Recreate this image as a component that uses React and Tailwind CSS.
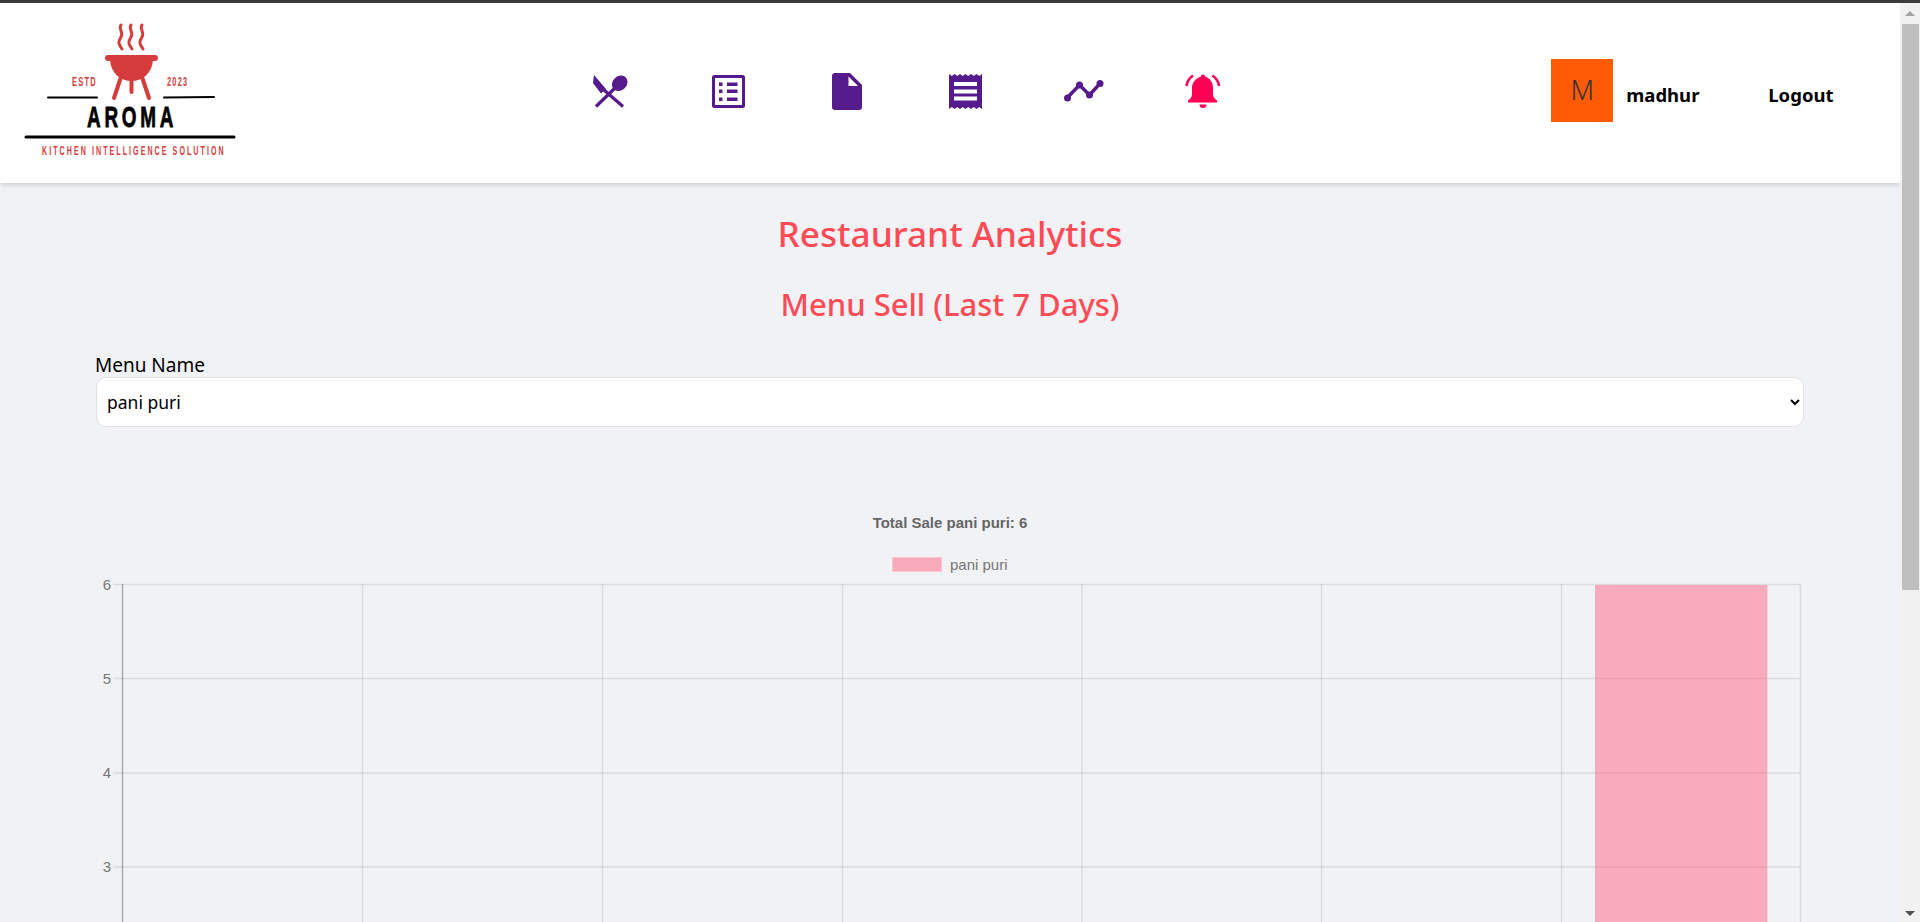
import React from 'react';

const Logo = () => (
    <svg width="260" height="180" viewBox="0 3 260 180" className="shrink-0">
        <g fill="none" stroke="#d63c3c" strokeWidth="3" strokeLinecap="round">
            <path d="M121 25c-3 4 3 7 0 12s-3 6 1 12" />
            <path d="M131 25c-3 4 3 7 0 12s-3 6 1 12" />
            <path d="M142 25c-3 4 3 7 0 12s-3 6 1 12" />
        </g>
        <rect x="105" y="55" width="53" height="6" rx="3" fill="#d63c3c" />
        <path d="M110 60h43c-1 13-10 21-21.500 21s-20.500-8-21.500-21z" fill="#d63c3c" />
        <g stroke="#d63c3c" strokeWidth="4" strokeLinecap="round">
            <path d="M121 77l-7 21" />
            <path d="M142 77l7 21" />
            <path d="M131.500 80v12" />
        </g>
        <g fill="#d63c3c" fontFamily="'Liberation Sans', sans-serif" fontWeight="700">
            <text transform="translate(72 86) scale(.62 1)" fontSize="12" letterSpacing="2">ESTD</text>
            <text transform="translate(167 86) scale(.62 1)" fontSize="12" letterSpacing="2">2023</text>
            <text transform="translate(42 155) scale(.59 1)" fontSize="12" letterSpacing="3.500">KITCHEN INTELLIGENCE SOLUTION</text>
        </g>
        <g stroke="#000" strokeWidth="2" strokeLinecap="round">
            <path d="M48 97.500h49" />
            <path d="M164 97.500l50-.5" />
        </g>
        <path d="M26 137h208" stroke="#000" strokeWidth="3" strokeLinecap="round" />
        <text transform="translate(87 127) scale(.63 1)" fontSize="30" fontWeight="700" fill="#000" stroke="#000" strokeWidth="0.8" fontFamily="'Liberation Sans', sans-serif" letterSpacing="6">AROMA</text>
    </svg>
);

const purple = '#551a8b';

const SpoonFork = () => (
    <svg width="35" height="33" viewBox="0 0 35 33">
        <path d="M1 0L0 8l8 10.500 5-4.500z" fill={purple} />
        <path d="M11 15l19 16.500M22 13L3 31.500" stroke={purple} strokeWidth="3.200" fill="none" />
        <ellipse cx="26.700" cy="8.300" rx="8.500" ry="7" transform="rotate(-45 26.700 8.300)" fill={purple} />
    </svg>
);

const FormList = () => (
    <svg width="33" height="33" viewBox="0 0 33 33">
        <rect x="1.500" y="1.500" width="30" height="30" rx="1" fill="none" stroke={purple} strokeWidth="3" />
        <g fill={purple}>
            <rect x="7" y="7.500" width="3.500" height="3.500" />
            <rect x="15" y="7.500" width="10.500" height="3.500" />
            <rect x="7" y="14.500" width="3.500" height="3.500" />
            <rect x="15" y="14.500" width="10.500" height="3.500" />
            <rect x="7" y="22.500" width="3.500" height="3.500" />
            <rect x="15" y="22.500" width="10.500" height="3.500" />
        </g>
    </svg>
);

const Doc = () => (
    <svg width="30" height="37" viewBox="0 0 30 37">
        <path d="M3 0h15l12 12v22a3 3 0 0 1-3 3H3a3 3 0 0 1-3-3V3a3 3 0 0 1 3-3z" fill={purple} />
        <path d="M16.500 3.500l9.500 9.500h-9.500z" fill="#fff" />
    </svg>
);

const Receipt = () => (
    <svg width="33" height="37" viewBox="0 0 33 37">
        <path d="M0 1l2.750 2 2.750-2 2.750 2 2.750-2 2.750 2 2.750-2 2.750 2 2.750-2 2.750 2 2.750-2 2.750 2 2.750-2v35l-2.750-2-2.750 2-2.750-2-2.750 2-2.750-2-2.750 2-2.750-2-2.750 2-2.750-2-2.750 2-2.750-2-2.750 2z" fill={purple} />
        <g fill="#fff">
            <rect x="5" y="9" width="23" height="4" />
            <rect x="5" y="16.500" width="23" height="4" />
            <rect x="5" y="23.500" width="23" height="4" />
        </g>
    </svg>
);

const LineIcon = () => (
    <svg width="40" height="22" viewBox="0 0 40 22">
        <path d="M3 18L15.500 5l10 10L36 3.500" fill="none" stroke={purple} strokeWidth="3.500" />
        <g fill={purple}>
            <circle cx="3.500" cy="18" r="3.500" />
            <circle cx="15.500" cy="5" r="3.500" />
            <circle cx="25.500" cy="15" r="3.500" />
            <circle cx="36" cy="3.500" r="3.500" />
        </g>
    </svg>
);

const Bell = () => (
    <svg width="36" height="36" viewBox="0 0 36 36">
        <g fill="#ff0055">
            <path d="M16 3.500a2 2 0 0 1 4 0c5 1.500 8 6 8 11v7c0 2.500 2 4.500 4 6v2H3v-2c2-1.500 4-3.500 4-6v-7c0-5 4-9.500 9-11z" />
            <path d="M14.500 31.500h7a3.500 3.500 0 0 1-7 0z" />
        </g>
        <g fill="none" stroke="#ff0055" strokeWidth="2.500">
            <path d="M1.500 13c.5-4.500 3-8 6.500-10.500" />
            <path d="M34 13c-.5-4.500-3-8-6.500-10.500" />
        </g>
    </svg>
);

const navIcons = [SpoonFork, FormList, Doc, Receipt, LineIcon, Bell];

// x positions of the chart, svg starts at page x=96
const vLines = [266, 506, 746, 985.500, 1225, 1465, 1704];
const yTicks = [
    { y: 74.500, label: '6' },
    { y: 168.500, label: '5' },
    { y: 263, label: '4' },
    { y: 357, label: '3' },
];

const Chart = () => (
    <svg width="1720" height="412" viewBox="0 0 1720 412" className="block" fontFamily="'Liberation Sans', sans-serif">
        <text x="854" y="18" textAnchor="middle" fontSize="15" fontWeight="700" fill="#666">Total Sale pani puri: 6</text>
        <rect x="796.500" y="47.500" width="49" height="14" fill="#f7aabb" stroke="#ffc6d2" />
        <text x="854" y="60" fontSize="15" fill="#777">pani puri</text>
        {yTicks.map((t) => (
            <g key={t.label}>
                <path d={`M17 ${t.y}H1704.500`} stroke="#000" strokeOpacity="0.09" strokeWidth="1.500" />
                <text x="15" y={t.y + 5} textAnchor="end" fontSize="15" fill="#777">{t.label}</text>
            </g>
        ))}
        {vLines.map((x) => (
            <path key={x} d={`M${x + 0.5} 74V412`} stroke="#000" strokeOpacity="0.09" strokeWidth="1.500" />
        ))}
        <path d="M26.500 74V412" stroke="#000" strokeOpacity="0.3" strokeWidth="1.500" />
        <rect x="1499" y="75" width="172" height="337" fill="#ff6384" fillOpacity="0.5" />
        <path d="M1671.500 75V412" stroke="#ffc6d2" strokeOpacity="0.8" />
    </svg>
);

const Scrollbar = () => (
    <aside className="w-[20px] shrink-0 bg-[#f1f1f1] flex flex-col items-center">
        <div className="h-[21px] w-full flex items-center justify-center">
            <div className="w-0 h-0 border-x-[5px] border-x-transparent border-b-[5px] border-b-[#a3a3a3]" />
        </div>
        <div className="h-[566px] w-[17px] bg-[#bfbfbf]" />
        <div className="flex-1" />
        <div className="h-[17px] w-full flex items-center justify-center">
            <div className="w-0 h-0 border-x-[5px] border-x-transparent border-t-[5px] border-t-[#505050]" />
        </div>
    </aside>
);

export default function App() {
    return (
        <div className="h-screen flex flex-col overflow-hidden bg-[#f1f2f6] font-['Noto_Sans',sans-serif]">
            <div className="h-[3px] shrink-0 bg-[#3c3c3c]" />
            <div className="flex-1 min-h-0 flex">
                <main className="flex-1 min-w-0 overflow-hidden">
                    <header className="h-[180px] bg-white flex items-center shadow-[0_2px_5px_rgba(0,0,0,0.15)]">
                        <Logo />
                        <nav className="ml-[291px] flex items-center -mt-[4px]">
                            {navIcons.map((Icon, i) => (
                                <a key={i} className="w-[118.500px] flex justify-center">
                                    <Icon />
                                </a>
                            ))}
                        </nav>
                        <div className="ml-auto flex items-center mr-[66.500px] mt-[4px]">
                            <div className="w-[62px] h-[63px] mb-[9px] bg-[#ff5a05] flex items-center justify-center text-[27px] font-light text-[#333]">M</div>
                            <span className="ml-[13px] w-[142px] text-[18.500px] font-bold text-black">madhur</span>
                            <span className="text-[18.500px] font-bold text-black">Logout</span>
                        </div>
                    </header>
                    <h1 className="mt-[24px] text-center text-[35.200px] leading-[52px] font-medium text-[#ff4b55]">Restaurant Analytics</h1>
                    <h2 className="mt-[25px] text-center text-[31px] leading-[40px] font-medium text-[#ff4b55]">Menu Sell (Last 7 Days)</h2>
                    <div className="mt-[29px] mx-[96px]">
                        <label className="block -ml-px text-[19px] leading-[24px] text-black">Menu Name</label>
                        <select className="block w-full h-[50px] bg-white border border-[#e0e0e5] rounded-[10px] pl-[6px] pr-[10px] text-[17.500px] text-black outline-none">
                            <option>pani puri</option>
                        </select>
                    </div>
                    <div className="mt-[83px] ml-[96px]">
                        <Chart />
                    </div>
                </main>
                <Scrollbar />
            </div>
        </div>
    );
}
